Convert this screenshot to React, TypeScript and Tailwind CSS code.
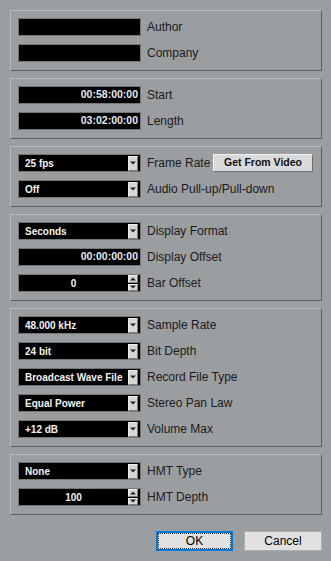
import React from "react";

const FONT = { fontFamily: '"Liberation Sans", Arial, sans-serif' };

function Panel({ children }: { children: React.ReactNode }) {
  return (
    <div className="flex flex-col gap-[8px] border border-t-[#b9bcbe] border-l-[#b9bcbe] border-b-[#5c5f62] border-r-[#5c5f62] pt-[7px] pb-[8px] px-[7px]">
      {children}
    </div>
  );
}

function Label({ children }: { children: React.ReactNode }) {
  return <div className="ml-[6px] text-[12px] leading-none text-[#1d1a1a]">{children}</div>;
}

function Field({ value, align = "right", text = "text-[#e4ebf5]" }: { value?: string; align?: "right" | "left"; text?: string }) {
  return (
    <div
      className={`flex h-[18px] w-[123px] items-center border border-[#74777a] bg-black px-[2px] text-[10.5px] font-bold ${text} ${align === "right" ? "justify-end" : "justify-start"}`}
    >
      {value}
    </div>
  );
}

function Dropdown({ value }: { value: string }) {
  return (
    <div className="flex h-[18px] w-[123px] items-center border border-[#74777a] bg-black">
      <div className="flex-1 pl-[6px] text-[10px] font-bold text-[#f2f2f2] truncate">{value}</div>
      <div className="mr-[2px] flex h-[15px] w-[10px] items-center justify-center border border-t-[#f0f0f0] border-l-[#f0f0f0] border-b-[#7b7b7b] border-r-[#7b7b7b] bg-[#d6d6d6]">
        <svg width="6" height="4" viewBox="0 0 6 4">
          <path d="M0 0.5h6L3 3.5z" fill="#222" />
        </svg>
      </div>
    </div>
  );
}

function Spinner({ value }: { value: string }) {
  return (
    <div className="flex h-[18px] w-[123px] items-center border border-[#74777a] bg-black">
      <div className="flex-1 text-center text-[10px] font-bold text-[#f2f2f2]">{value}</div>
      <div className="mr-[2px] flex h-[16px] w-[10px] flex-col gap-[1px]">
        <div className="flex flex-1 items-center justify-center border border-t-[#f0f0f0] border-l-[#f0f0f0] border-b-[#7b7b7b] border-r-[#7b7b7b] bg-[#d6d6d6]">
          <svg width="6" height="4" viewBox="0 0 6 4">
            <path d="M0 3.5h6L3 0.5z" fill="#222" />
          </svg>
        </div>
        <div className="flex flex-1 items-center justify-center border border-t-[#f0f0f0] border-l-[#f0f0f0] border-b-[#7b7b7b] border-r-[#7b7b7b] bg-[#d6d6d6]">
          <svg width="6" height="4" viewBox="0 0 6 4">
            <path d="M0 0.5h6L3 3.5z" fill="#222" />
          </svg>
        </div>
      </div>
    </div>
  );
}

function Row({ children }: { children: React.ReactNode }) {
  return <div className="flex h-[18px] items-center">{children}</div>;
}

export default function App() {
  return (
    <div style={FONT} className="flex h-[561px] w-[331px] flex-col bg-[#9b9ea1] pt-[10px] pl-[10px] pr-[9px]">
      <div className="flex flex-col gap-[7px]">
        <Panel>
          <Row><Field /><Label>Author</Label></Row>
          <Row><Field /><Label>Company</Label></Row>
        </Panel>
        <Panel>
          <Row><Field value="00:58:00:00" /><Label>Start</Label></Row>
          <Row><Field value="03:02:00:00" /><Label>Length</Label></Row>
        </Panel>
        <Panel>
          <Row>
            <Dropdown value="25 fps" />
            <Label>Frame Rate</Label>
            <button className="ml-auto mr-[1px] h-[18px] w-[100px] border border-t-[#f4f4f4] border-l-[#f4f4f4] border-b-[#6d6f71] border-r-[#6d6f71] bg-[#d9dadb] text-[10.5px] font-bold text-[#111]">
              Get From Video
            </button>
          </Row>
          <Row><Dropdown value="Off" /><Label>Audio Pull-up/Pull-down</Label></Row>
        </Panel>
        <Panel>
          <Row><Dropdown value="Seconds" /><Label>Display Format</Label></Row>
          <Row><Field value="00:00:00:00" /><Label>Display Offset</Label></Row>
          <Row><Spinner value="0" /><Label>Bar Offset</Label></Row>
        </Panel>
        <Panel>
          <Row><Dropdown value="48.000 kHz" /><Label>Sample Rate</Label></Row>
          <Row><Dropdown value="24 bit" /><Label>Bit Depth</Label></Row>
          <Row><Dropdown value="Broadcast Wave File" /><Label>Record File Type</Label></Row>
          <Row><Dropdown value="Equal Power" /><Label>Stereo Pan Law</Label></Row>
          <Row><Dropdown value="+12 dB" /><Label>Volume Max</Label></Row>
        </Panel>
        <Panel>
          <Row><Dropdown value="None" /><Label>HMT Type</Label></Row>
          <Row><Spinner value="100" /><Label>HMT Depth</Label></Row>
        </Panel>
      </div>
      <div className="mt-[16px] flex justify-end gap-[11px] pr-[0px]">
        <button className="flex h-[20px] w-[77px] items-center justify-center border-2 border-[#0078d7] bg-[#e1e1e1] p-0">
          <span className="flex h-full w-full items-center justify-center border border-dotted border-[#333] text-[12px] text-black">OK</span>
        </button>
        <button className="flex h-[20px] w-[78px] items-center justify-center border border-[#adadad] bg-[#e1e1e1] text-[12px] text-black">
          Cancel
        </button>
      </div>
    </div>
  );
}
